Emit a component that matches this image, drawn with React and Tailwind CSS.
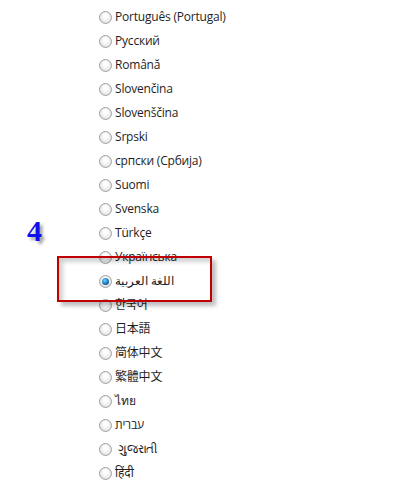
const languages = [
  'Português (Portugal)',
  'Русский',
  'Română',
  'Slovenčina',
  'Slovenščina',
  'Srpski',
  'српски (Србија)',
  'Suomi',
  'Svenska',
  'Türkçe',
  'Українська',
  'اللغة العربية',
  '한국어',
  '日本語',
  '简体中文',
  '繁體中文',
  'ไทย',
  'עברית',
  ' ગુજરાતી',
  'हिंदी',
]

const selected = 'اللغة العربية'

function Radio({ checked }) {
  return (
    <span className="w-[13px] h-[13px] rounded-full border border-[#a0a0a0] bg-[radial-gradient(circle_at_50%_40%,#ffffff_20%,#dcdcdc_85%)] flex items-center justify-center shrink-0">
      {checked && (
        <span className="w-[7px] h-[7px] rounded-full bg-[radial-gradient(circle_at_40%_35%,#6fd0ff,#0a5fa8_70%,#03325e)]" />
      )}
    </span>
  )
}

export default function App() {
  return (
    <div className="relative w-[408px] h-[488px] bg-white overflow-hidden" style={{ fontFamily: '"Open Sans", "Noto Sans", "Noto Sans CJK JP", sans-serif' }}>
      <div className="pt-[5px] pl-[99px] flex flex-col">
        {languages.map((lang) => (
          <label key={lang} className="h-[24px] flex items-center gap-[3px] text-[12px] tracking-[-0.2px] text-[#1e1e1e]">
            <Radio checked={lang === selected} />
            <span className="whitespace-pre">{lang}</span>
          </label>
        ))}
      </div>

      {/* step number */}
      <div className="absolute left-[27px] top-[216px] text-[30px] font-bold text-[#1010ee] leading-none [text-shadow:3px_3px_3px_rgba(0,0,0,0.35)]" style={{ fontFamily: '"Liberation Serif", serif' }}>
        4
      </div>

      {/* highlight box */}
      <div className="absolute left-[57px] top-[256px] w-[155px] h-[46px] border-2 border-[#c00000] shadow-[4px_4px_4px_rgba(0,0,0,0.25),inset_4px_4px_4px_rgba(0,0,0,0.18)]" />
    </div>
  )
}
